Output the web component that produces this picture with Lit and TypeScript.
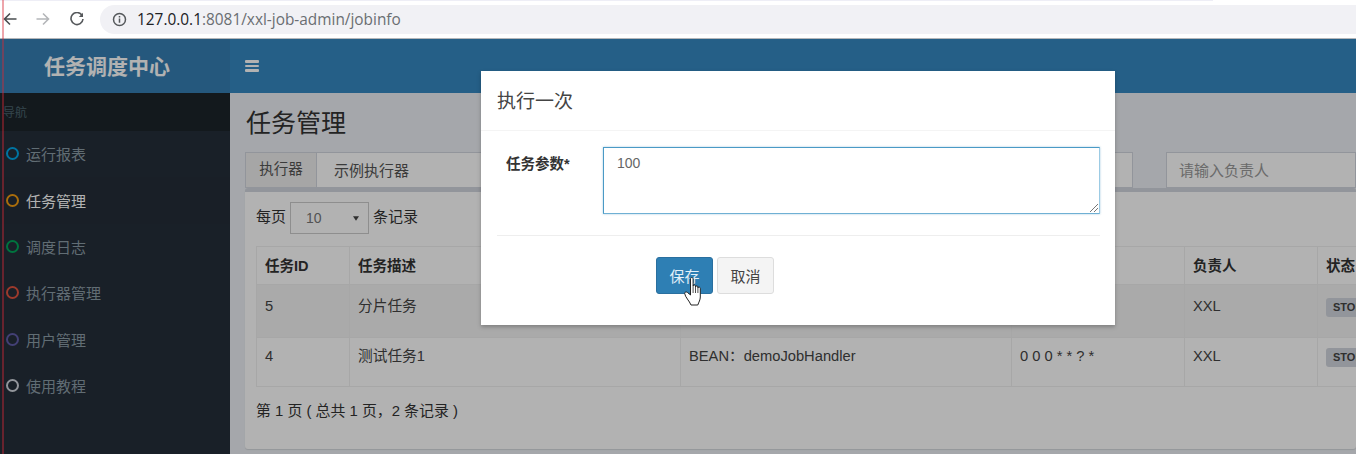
import { LitElement, html, css } from "lit";
import { customElement } from "lit/decorators.js";

const NAV = [
  { t: "运行报表", c: "#00a7e8" },
  { t: "任务管理", c: "#f39c12", active: true },
  { t: "调度日志", c: "#00a65a" },
  { t: "执行器管理", c: "#e0533f" },
  { t: "用户管理", c: "#605ca8" },
  { t: "使用教程", c: "#d2d6de" },
];

@customElement("app-root")
export class AppRoot extends LitElement {
  static styles = css`
    :host {
      display: block;
      position: relative;
      width: 1356px;
      height: 454px;
      overflow: hidden;
      background: #ecf0f5;
      font-family: "Liberation Sans", "Noto Sans CJK SC", sans-serif;
      font-size: 15px;
      color: #333;
    }
    .chrome {
      position: relative;
      height: 39px;
      box-sizing: border-box;
      background: #fff;
      border-bottom: 1px solid #b4b6b9;
      display: flex;
      align-items: center;
      padding: 0 0 0 3px;
    }
    .strip { position: absolute; left: 0; top: 0; width: 1213px; height: 1px; background: #eeeef6; }
    .navbtn { width: 14px; height: 14px; flex: none; display: block; }
    .fwd { margin-left: 19px; }
    .rel { margin-left: 20px; }
    .omni {
      margin-left: 16px;
      flex: 1;
      height: 29px;
      border-radius: 15px 0 0 15px;
      background: #f1f1f5;
      display: flex;
      align-items: center;
      padding-left: 12px;
      font-family: "Open Sans", "Noto Sans", sans-serif;
      font-size: 15.4px;
      color: #6a6e72;
    }
    .omni svg { width: 15px; height: 15px; margin-right: 10px; flex: none; }
    .omni b { font-weight: 400; color: #202124; }
    .page { display: flex; height: 415px; }
    .side { width: 230px; flex: none; background: #252e3a; display: flex; flex-direction: column; }
    .logo {
      height: 54px;
      box-sizing: border-box;
      background: #367fb3;
      color: #fff;
      font-size: 21px;
      font-weight: 700;
      display: flex;
      align-items: center;
      padding: 0 0 2px 44px;
    }
    .nav-h {
      height: 38px;
      box-sizing: border-box;
      background: #1c242a;
      color: #4b646f;
      font-size: 12px;
      display: flex;
      align-items: center;
      padding: 0 0 2px 3px;
    }
    .item {
      height: 46.4px;
      display: flex;
      align-items: center;
      padding: 0 0 1px 6px;
      box-sizing: border-box;
      color: #8c9ca6;
      font-size: 15px;
    }
    .item.active { color: #fff; background: #242d38; }
    .dot {
      width: 9px;
      height: 9px;
      border: 2px solid;
      border-radius: 50%;
      margin-right: 7px;
      flex: none;
    }
    .main { flex: 1; min-width: 0; display: flex; flex-direction: column; }
    .top { height: 54px; flex: none; background: #3688c2; display: flex; align-items: center; padding-left: 15px; }
    .bars { display: flex; flex-direction: column; gap: 2px; width: 14px; }
    .bars i { display: block; height: 2.5px; background: #fff; border-radius: 1px; }
    .content { flex: 1; padding: 0 0 5px 15px; display: flex; flex-direction: column; min-height: 0; }
    h1 {
      margin: 0;
      height: 59px;
      box-sizing: border-box;
      padding-top: 14px;
      font-size: 25px;
      line-height: 32px;
      font-weight: 400;
      flex: none;
      padding-left: 1px;
    }
    .filters { display: flex; height: 36px; flex: none; gap: 33px; }
    .group { display: flex; width: 888px; flex: none; }
    .addon {
      width: 72px;
      box-sizing: border-box;
      background: #eee;
      border: 1px solid #d2d6de;
      display: flex;
      align-items: center;
      justify-content: center;
      color: #555;
      font-size: 14.5px;
      padding-bottom: 5px;
    }
    .fake {
      flex: 1;
      background: #fff;
      border: 1px solid #d2d6de;
      border-left: 0;
      display: flex;
      align-items: center;
      padding: 0 0 2px 17px;
      color: #555;
    }
    .ph {
      flex: 1;
      background: #fff;
      border: 1px solid #d2d6de;
      display: flex;
      align-items: center;
      padding: 0 0 2px 12px;
      color: #999;
    }
    .box {
      flex: 1;
      min-height: 0;
      background: #fff;
      border-top: 4px solid #d2d6de;
      border-radius: 3px;
      padding: 10px 0 0 11px;
      box-shadow: 0 1px 1px rgba(0, 0, 0, 0.1);
      overflow: hidden;
    }
    .len { display: flex; align-items: center; height: 32px; gap: 4px; color: #333; }
    .len span { padding-bottom: 5px; }
    .sel {
      width: 79px;
      height: 32px;
      box-sizing: border-box;
      border: 1px solid #ccc;
      display: flex;
      align-items: center;
      justify-content: space-between;
      padding: 0 9px 0 15px;
      font-size: 14px;
      color: #777;
    }
    .sel svg { width: 6px; height: 5px; }
    table {
      margin-top: 12px;
      border-collapse: collapse;
      table-layout: fixed;
      width: 1160px;
      font-size: 14.7px;
    }
    td, th { border: 1px solid #f0f0f0; padding: 8px; vertical-align: top; text-align: left; line-height: 20px; }
    th { height: 38px; box-sizing: border-box; font-weight: 700; font-size: 14.5px; vertical-align: middle; padding: 0 8px; }
    td { box-sizing: border-box; color: #444; }
    tr.r1 td { height: 53px; background: #f4f4f4; padding-top: 11px; }
    tr.r2 td { height: 49px; }
    .label {
      display: inline-block;
      background: #d2d6de;
      color: #444;
      font-size: 11px;
      font-weight: 700;
      padding: 2px 7px;
      border-radius: 3px;
      line-height: 15px;
    }
    .info { margin-top: 12px; line-height: 24px; font-size: 14.9px; }
    .backdrop {
      position: absolute;
      left: 0;
      top: 39px;
      right: 0;
      bottom: 0;
      background: rgba(0, 0, 0, 0.3);
      padding: 32px 0 0 481px;
    }
    .modal {
      width: 634px;
      height: 254px;
      background: #fff;
      box-shadow: 0 2px 4px rgba(0, 0, 0, 0.25);
      box-sizing: border-box;
    }
    .m-h {
      height: 60px;
      box-sizing: border-box;
      border-bottom: 1px solid #f4f4f4;
      display: flex;
      align-items: center;
      padding: 0 0 2px 16px;
      font-size: 19px;
      color: #444;
    }
    .m-b { padding: 16px 15px 0 16px; }
    .row { display: flex; }
    .lbl { width: 106px; flex: none; padding: 7px 0 0 9px; box-sizing: border-box; font-weight: 700; font-size: 14.5px; line-height: 20px; }
    .ta {
      flex: 1;
      position: relative;
      height: 67px;
      box-sizing: border-box;
      border: 1px solid;
      border-color: #4a9ac6 #9ccbe4 #6fb0d4 #4a9ac6;
      box-shadow: 0 0 2px rgba(60, 141, 188, 0.45);
      padding: 5px 13px;
      font-size: 14px;
      line-height: 20px;
      color: #666;
    }
    .grip { position: absolute; right: 1px; bottom: 1px; width: 9px; height: 9px; }
    .hr { height: 1px; background: #eee; margin-top: 21px; }
    .btns { display: flex; gap: 4px; margin: 21px 0 0 159px; }
    .btn {
      width: 57px;
      height: 37px;
      box-sizing: border-box;
      border-radius: 3px;
      border: 1px solid #ddd;
      background: #f4f4f4;
      color: #444;
      display: flex;
      align-items: center;
      justify-content: center;
      font-size: 15px;
    }
    .btn.pri { background: #2e7fb4; border-color: #2a6f9f; color: #e2f0f8; }
    .line { position: absolute; left: 2px; top: 0; bottom: 0; width: 2px; background: rgba(215, 40, 55, 0.42); }
    .hand { position: absolute; left: 684px; top: 277px; width: 18px; height: 29px; }
  `;

  render() {
    return html`
      <div class="chrome">
        <div class="strip"></div>
        <svg class="navbtn" viewBox="0 0 14 14" fill="none" stroke="#4a4d50" stroke-width="1.6"><path d="M13.500 7H1.500M7 1.500 1.500 7 7 12.500"/></svg>
        <svg class="navbtn fwd" viewBox="0 0 14 14" fill="none" stroke="#b4b6b9" stroke-width="1.6"><path d="M.5 7h12M7 1.500 12.500 7 7 12.500"/></svg>
        <svg class="navbtn rel" viewBox="0 0 14 14" fill="none" stroke="#55585b" stroke-width="1.6"><path d="M12 3.200A6 6 0 1 0 13 7"/><path d="M13 .8v4.200H8.800" fill="#55585b" stroke="none"/></svg>
        <div class="omni">
          <svg viewBox="0 0 15 15" fill="none" stroke="#55585b" stroke-width="1.5"><circle cx="7.500" cy="7.500" r="6"/><path d="M7.500 6.600v4.200M7.500 4v1.600"/></svg>
          <span><b>127.0.0.1</b>:8081/xxl-job-admin/jobinfo</span>
        </div>
      </div>
      <div class="page">
        <aside class="side">
          <div class="logo">任务调度中心</div>
          <div class="nav-h">导航</div>
          ${NAV.map(
            (n) => html`<div class="item ${n.active ? "active" : ""}">
              <span class="dot" style="border-color:${n.c}"></span>${n.t}
            </div>`
          )}
        </aside>
        <div class="main">
          <div class="top"><div class="bars"><i></i><i></i><i></i></div></div>
          <div class="content">
            <h1>任务管理</h1>
            <div class="filters">
              <div class="group"><div class="addon">执行器</div><div class="fake">示例执行器</div></div>
              <div class="ph">请输入负责人</div>
            </div>
            <div class="box">
              <div class="len"><span>每页</span>
                <div class="sel">10<svg viewBox="0 0 7 5"><path d="M0 0h7L3.500 5z" fill="#444"/></svg></div>
                <span>条记录</span>
              </div>
              <table>
                <colgroup><col style="width:93px"/><col style="width:331px"/><col style="width:331px"/><col style="width:173px"/><col style="width:133px"/><col style="width:99px"/></colgroup>
                <tr><th>任务ID</th><th>任务描述</th><th></th><th></th><th>负责人</th><th>状态</th></tr>
                <tr class="r1"><td>5</td><td>分片任务</td><td></td><td></td><td>XXL</td><td><span class="label">STOP</span></td></tr>
                <tr class="r2"><td>4</td><td>测试任务1</td><td>BEAN：demoJobHandler</td><td>0 0 0 * * ? *</td><td>XXL</td><td><span class="label">STOP</span></td></tr>
              </table>
              <div class="info">第 1 页 ( 总共 1 页，2 条记录 )</div>
            </div>
          </div>
        </div>
      </div>
      <div class="backdrop">
        <div class="modal">
          <div class="m-h">执行一次</div>
          <div class="m-b">
            <div class="row">
              <div class="lbl">任务参数*</div>
              <div class="ta">100
                <svg class="grip" viewBox="0 0 9 9" stroke="#777" stroke-width="1"><path d="M1 9 9 1M5 9 9 5"/></svg>
              </div>
            </div>
            <div class="hr"></div>
            <div class="btns">
              <div class="btn pri">保存</div>
              <div class="btn">取消</div>
            </div>
          </div>
        </div>
      </div>
      <div class="line"></div>
      <svg class="hand" viewBox="0 0 18 29"><path d="M6.500 2c0-2 2.600-2 2.600 0v7c0-1.400 2.400-1.400 2.400 0v1c0-1.400 2.400-1.400 2.400 0v1c0-1.200 2.400-1.200 2.400.4V20c0 3-1.500 5-2.500 8H7C5.500 24 1 20 .7 16.500c-.2-1.500 1.800-2 2.800-1l3 2.500z" fill="#fff" stroke="#222" stroke-width="1"/><path d="M9.100 9v7M11.500 10v6M13.900 11v5" stroke="#222" stroke-width=".8"/></svg>
    `;
  }
}
